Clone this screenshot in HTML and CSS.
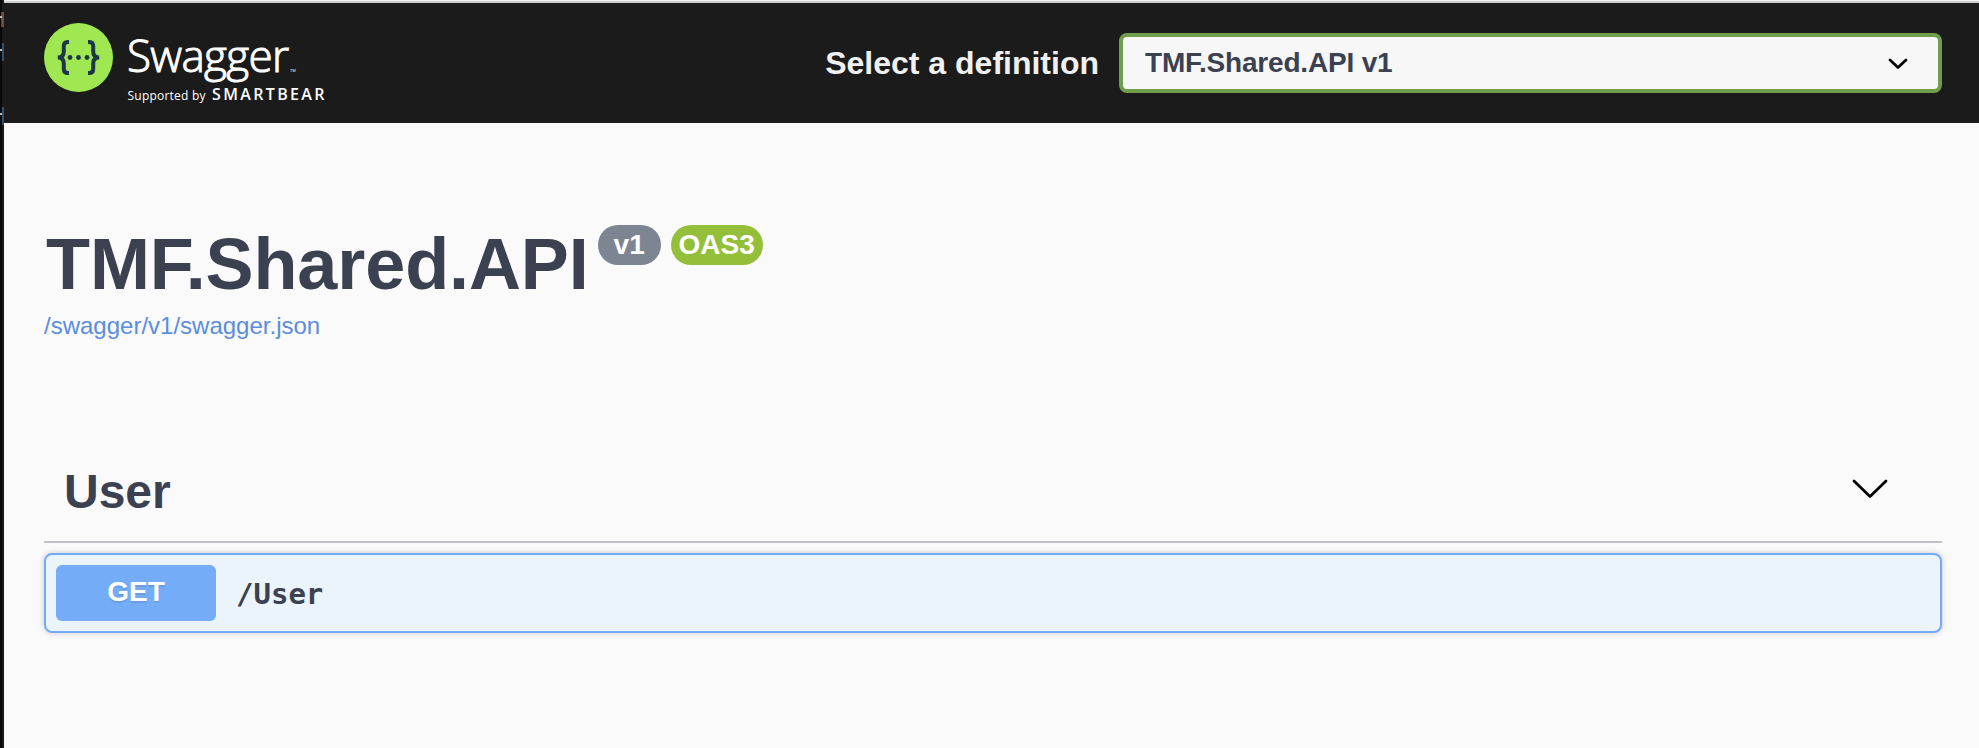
FILE: index.html
```
<!DOCTYPE html>
<html lang="en">
<head>
<meta charset="utf-8">
<title>Swagger UI</title>
<link rel="stylesheet" href="styles.css">
</head>
<body>
<div class="window">
  <aside class="edge">
    <svg width="4" height="748" viewBox="0 0 4 748">
      <path fill="#080808" d="M0 0h2v748H0z"/>
      <path fill="#1c1a19" d="M2 0h2v748H2z"/>
      <path fill="#34506f" d="M1 12h1v15H1zM2 43h2v18H2zM2 107h2v18H2z"/>
      <path fill="#6e5140" d="M2 12h2v15H2z"/>
      <path fill="#bbb" d="M0 16h2v2H0zM0 49h2v2H0zM0 113h2v2H0z"/>
    </svg>
  </aside>
  <div class="page">
    <header class="topbar">
      <svg class="logo" width="286" height="90" viewBox="44 18 286 90">
        <circle cx="78.5" cy="57.5" r="34.5" fill="#9fe851"/>
        <g fill="none" stroke="#1d3649" stroke-width="4">
          <path d="M69 42h-1.200q-4 0-4 4v5.500q0 6-6 6q6 0 6 6V69q0 4 4 4H69"/>
          <path d="M88 42h1.200q4 0 4 4v5.500q0 6 6 6q-6 0-6 6V69q0 4-4 4H88"/>
        </g>
        <g fill="#1d3649"><circle cx="70" cy="57.500" r="2.400"/><circle cx="78.500" cy="57.500" r="2.400"/><circle cx="87" cy="57.500" r="2.400"/></g>
        <g fill="#fff">
          <text class="logo-name" x="127" y="71.500" textLength="162" lengthAdjust="spacing">Swagger</text>
          <text class="logo-tm" x="290" y="71.500">TM</text>
          <text class="logo-by" x="127.500" y="100" textLength="78">Supported by</text>
          <text class="logo-brand" x="212" y="100" textLength="112.500">SMARTBEAR</text>
        </g>
      </svg>
      <div class="definition">
        <span class="definition-label">Select a definition</span>
        <div class="select">
          <span>TMF.Shared.API v1</span>
          <svg width="20" height="12" viewBox="0 0 20 12"><path d="M2 2l8 7.500L18 2" fill="none" stroke="#000" stroke-width="2.800" stroke-linecap="round" stroke-linejoin="round"/></svg>
        </div>
      </div>
    </header>
    <main class="content">
      <section class="info">
        <div class="heading">
          <h1>TMF.Shared.API</h1>
          <span class="badge">v1</span>
          <span class="badge badge-oas">OAS3</span>
        </div>
        <a class="spec">/swagger/v1/swagger.json</a>
      </section>
      <section>
        <div class="tag">
          <h2>User</h2>
          <svg width="36" height="20" viewBox="0 0 36 20"><path d="M2 2l16 15.500L34 2" fill="none" stroke="#000" stroke-width="2.800" stroke-linecap="round" stroke-linejoin="round"/></svg>
        </div>
        <div class="operation">
          <span class="method">GET</span>
          <span class="path">/User</span>
        </div>
      </section>
    </main>
  </div>
</div>
</body>
</html>
```
FILE: styles.css
```
* { box-sizing: border-box; }
body { margin: 0; background: #fafafa; color: #3b4151; font-family: "Liberation Sans", Arial, sans-serif; overflow: hidden; }
.window { display: flex; height: 748px; }
.edge { width: 4px; flex: none; }
.edge svg { display: block; }
.page { flex: 1; border-top: 1px solid #f3f3f3; }
.topbar { height: 122px; padding: 15px 37px 0 40px; display: flex; justify-content: space-between; align-items: flex-start; background: #1b1b1b; border-top: 2px solid #cfcfcf; }
.logo { display: block; }
.logo-name { font: 300 44px "Open Sans", sans-serif; stroke: #fff; stroke-width: 1px; }
.logo-tm { font: 4px "Open Sans", sans-serif; }
.logo-by { font: 12px "Open Sans", sans-serif; }
.logo-brand { font: 600 16px "Open Sans", sans-serif; }
.definition { display: flex; align-items: center; height: 60px; margin-top: 15px; gap: 20px; }
.definition-label { color: #f0f0f0; font-size: 32px; font-weight: 700; }
.select { width: 823px; height: 60px; border: 4px solid #709e4b; border-radius: 8px; background: #f7f7f7; display: flex; align-items: center; justify-content: space-between; padding: 0 30px 0 22px; font-size: 28px; font-weight: 700; letter-spacing: -0.18px; }
.select svg { margin-top: 1px; }
.content { padding: 102px 37px 0 40px; }
.info { height: 224px; }
.heading { display: flex; align-items: flex-start; height: 80px; }
h1 { margin: -1px 9px 0 2px; font-size: 72px; line-height: 80px; letter-spacing: -0.1px; color: #3b4151; }
.badge { width: 63px; height: 40px; margin-right: 10px; border-radius: 20px; background: #7d8492; color: #fff; font-size: 28px; font-weight: 700; line-height: 39px; text-align: center; }
.badge-oas { width: 92px; background: #93bf3b; }
.spec { display: block; font-size: 24px; line-height: 28px; margin-top: 7px; color: #5b8ddf; }
.tag { height: 94px; border-bottom: 2px solid #c1c2c7; padding: 0 54px 7px 20px; display: flex; align-items: center; justify-content: space-between; }
h2 { margin: 0; font-size: 48px; line-height: 56px; }
.tag svg { margin-bottom: 6px; }
.operation { margin-top: 10px; height: 80px; padding: 0 10px; border: 2px solid #72abf8; border-radius: 8px; background: #ebf3fb; box-shadow: 0 0 6px rgba(0,0,0,.19); display: flex; align-items: center; }
.method { width: 160px; height: 56px; line-height: 54px; border-radius: 6px; background: #74acf8; color: #fff; font-size: 28px; font-weight: 700; text-align: center; text-shadow: 0 2px 0 rgba(0,0,0,.1); }
.path { margin: 2px 0 0 20px; font: 700 29px "DejaVu Sans Mono", monospace; }
```
